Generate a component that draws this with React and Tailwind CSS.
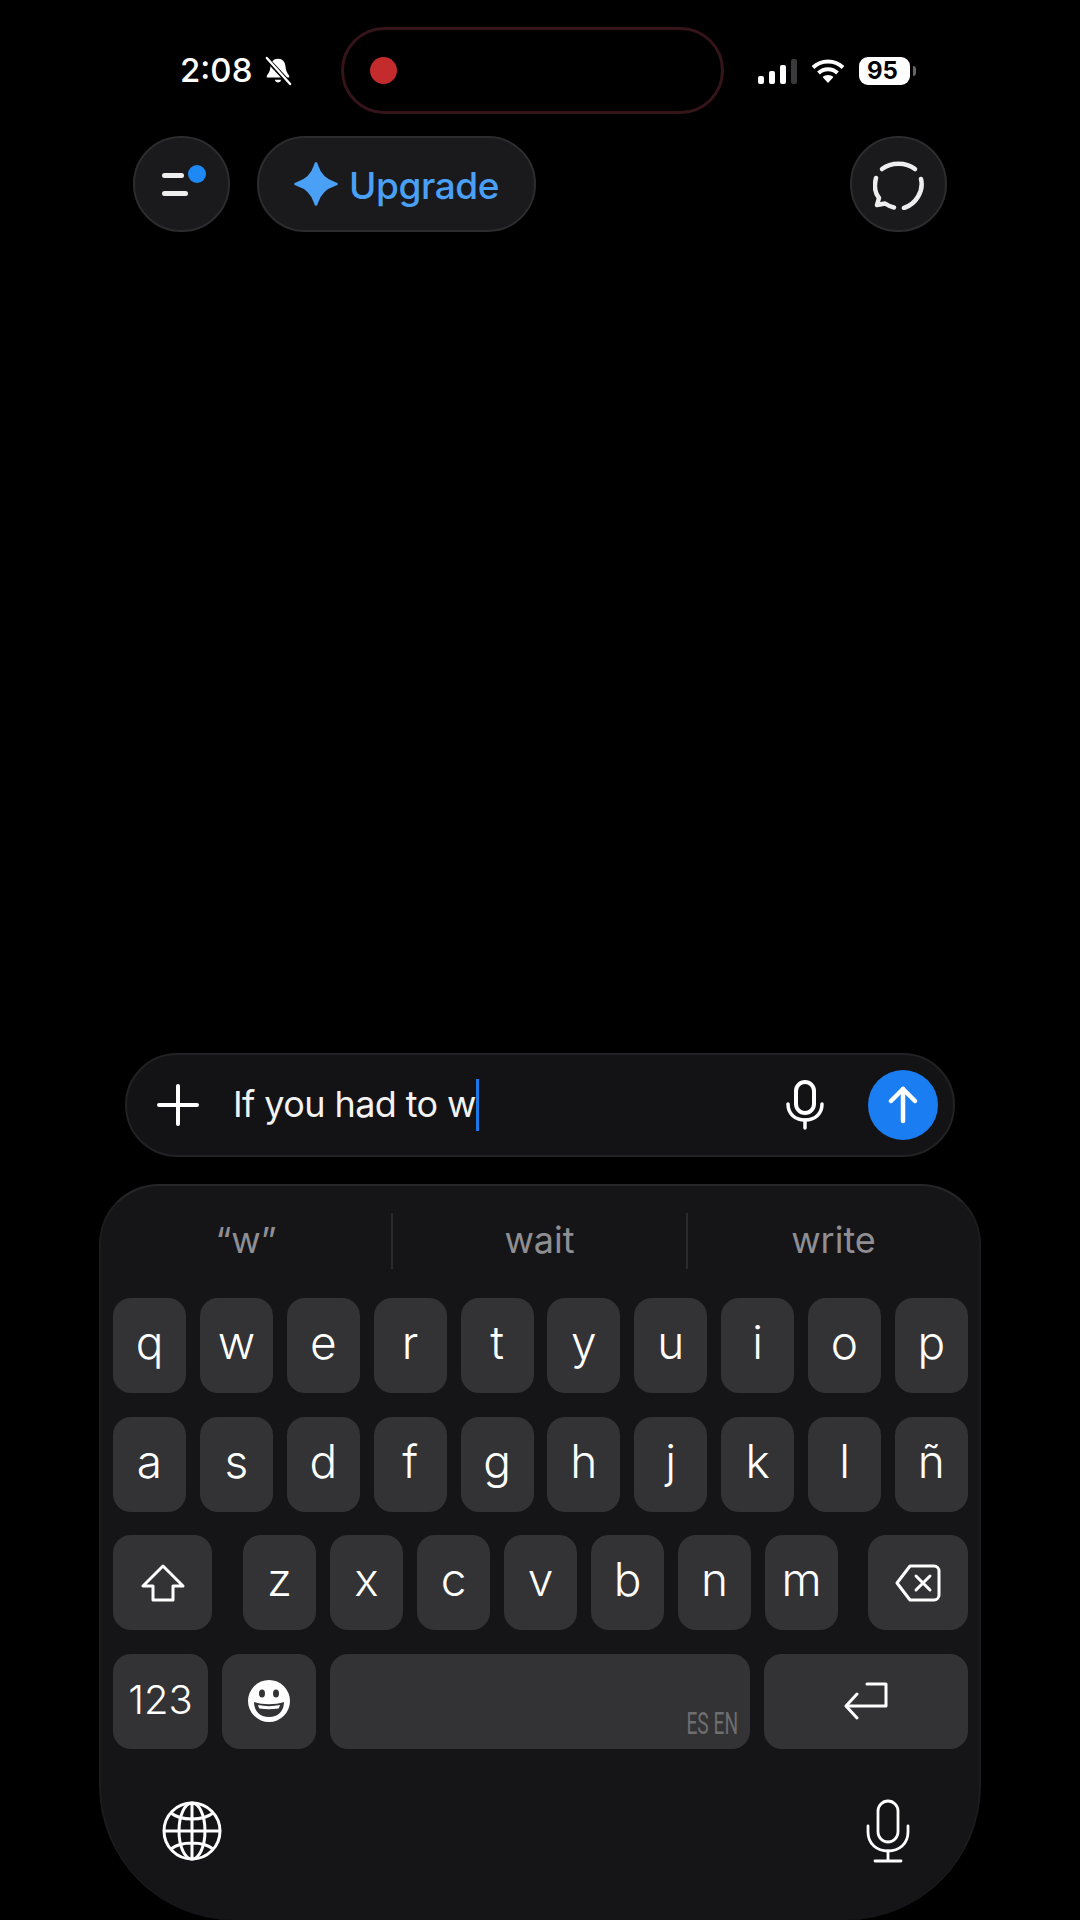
import React from 'react';

const Key = ({ children, className = 'w-[73px]' }) => (
    <div className={`${className} h-[95px] shrink-0 rounded-[18px] bg-[#333335] flex items-center justify-center text-white text-[46px] font-light leading-none`}>
        {children}
    </div>
);

// letter keys sit a little above the middle of the cap
const Letter = ({ children }) => <span className="-mt-[7px]">{children}</span>;

const Row = ({ letters }) => letters.map((l) => <Key key={l}><Letter>{l}</Letter></Key>);

const Bell = () => (
    <svg width="28" height="30" viewBox="0 0 30 30" fill="none">
        <path d="M15 2c-5 0-7.5 3.500-8 8-.4 4.500-1.500 7-4 10v2h24v-2c-2.500-3-3.600-5.500-4-10-.5-4.500-3-8-8-8z" fill="#fff" />
        <path d="M11.500 24.500a3.600 3.600 0 0 0 7 0z" fill="#fff" />
        <path d="M2 1l26 28" stroke="#000" strokeWidth="5" />
        <path d="M3 1l25 28" stroke="#fff" strokeWidth="2.500" strokeLinecap="round" />
    </svg>
);

const Wifi = () => (
    <svg width="34" height="26" viewBox="0 0 34 26" fill="none" stroke="#fff" strokeWidth="4">
        <path d="M2 9.500c8.500-8 21.500-8 30 0" />
        <path d="M7.500 15c5.500-5 13.500-5 19 0" />
        <path d="M17 25l-5.500-6c3-2.700 8-2.700 11 0z" fill="#fff" stroke="none" />
    </svg>
);

const Signal = () => (
    <div className="flex items-end gap-[5px] h-[26px]">
        <div className="w-[6px] h-[8px] rounded-[2px] bg-white" />
        <div className="w-[6px] h-[13px] rounded-[2px] bg-white" />
        <div className="w-[6px] h-[19px] rounded-[2px] bg-white" />
        <div className="w-[6px] h-[25px] rounded-[2px] bg-[#3a3a3c]" />
    </div>
);

const Sparkle = () => (
    <svg width="46" height="46" viewBox="0 0 46 46">
        <path d="M23 1Q24.500 1 25 4Q29 17 42 21Q45 22 45 23Q45 24 42 25Q29 29 25 42Q24.500 45 23 45Q21.500 45 21 42Q17 29 4 25Q1 24 1 23Q1 22 4 21Q17 17 21 4Q21.500 1 23 1z" fill="#4aa0f5" />
    </svg>
);

const ChatRing = () => (
    <svg width="51" height="49" viewBox="0 0 51 49" fill="none" stroke="#eeeeee" strokeWidth="4.500" strokeLinecap="round" strokeLinejoin="round">
        <path d="M9 8C18 1 33 1 42 8" />
        <path d="M48 18C51 30 43 43 31 47" />
        <path d="M3 17C1 25 2 32 6 37L4 44L12 42.500C15 44.500 18 46 21 46.500" />
    </svg>
);

const InputMic = () => (
    <svg width="38" height="50" viewBox="0 0 38 50" fill="none" stroke="#fff" strokeLinecap="round">
        <rect x="10" y="2" width="18" height="31" rx="9" strokeWidth="4" />
        <path d="M2 24c0 10 7 16 17 16s17-6 17-16" strokeWidth="3.500" />
        <path d="M19 40v8" strokeWidth="3.500" />
    </svg>
);

const ArrowUp = () => (
    <svg width="34" height="38" viewBox="0 0 34 38" fill="none" stroke="#fff" strokeWidth="4.500" strokeLinecap="round" strokeLinejoin="round">
        <path d="M17 35V3" />
        <path d="M5 15L17 3l12 12" />
    </svg>
);

const Shift = () => (
    <svg width="44" height="38" viewBox="0 0 44 38" fill="none" stroke="#fff" strokeWidth="3" strokeLinejoin="round">
        <path d="M22 2L2 22h10v14h20V22h10z" />
    </svg>
);

const Backspace = () => (
    <svg width="46" height="38" viewBox="0 0 46 38" fill="none" stroke="#fff" strokeWidth="3" strokeLinejoin="round" strokeLinecap="round">
        <path d="M15 2h24a5 5 0 0 1 5 5v24a5 5 0 0 1-5 5H15L2 19z" />
        <path d="M21 12l14 14M35 12L21 26" />
    </svg>
);

const Smile = () => (
    <svg width="44" height="44" viewBox="0 0 44 44">
        <circle cx="22" cy="22" r="21" fill="#fff" />
        <ellipse cx="15" cy="14.500" rx="3" ry="4" fill="#333335" />
        <ellipse cx="29" cy="14.500" rx="3" ry="4" fill="#333335" />
        <path d="M7 23c9 3 21 3 30 0c0 9-6 15-15 15S7 32 7 23z" fill="#333335" />
        <path d="M11 26c7 1.500 15 1.500 22 0c-.5 2-1 3-1.500 3.500c-6 1-13 1-19 0c-.5-.5-1-1.500-1.500-3.500z" fill="#fff" />
    </svg>
);

const Return = () => (
    <svg width="44" height="38" viewBox="0 0 44 38" fill="none" stroke="#fff" strokeWidth="3" strokeLinecap="round" strokeLinejoin="round">
        <path d="M23 2h19v22H3" />
        <path d="M13 12L2 24l11 12" />
    </svg>
);

const Globe = () => (
    <svg width="60" height="60" viewBox="0 0 60 60" fill="none" stroke="#fff" strokeWidth="3">
        <circle cx="30" cy="30" r="28" />
        <ellipse cx="30" cy="30" rx="13" ry="28" />
        <path d="M30 2v56M2 30h56M9 12c10 8 32 8 42 0M9 48c10-8 32-8 42 0" />
    </svg>
);

const BottomMic = () => (
    <svg width="44" height="64" viewBox="0 0 44 64" fill="none" stroke="#fff" strokeWidth="2.800" strokeLinecap="round">
        <rect x="12" y="2" width="20" height="41" rx="10" />
        <path d="M2 27v6c0 12 9 19 20 19s20-7 20-19v-6" />
        <path d="M22 52v10M9 62h26" />
    </svg>
);

export default function App() {
    return (
        <div className="w-[1080px] h-[1920px] bg-black flex flex-col overflow-hidden font-['Inter',sans-serif] text-white">
            {/* status bar */}
            <div className="h-[87px] mt-[27px] flex shrink-0">
                <div className="w-[341px] pl-[180px] flex items-center gap-[12px]">
                    <span className="text-[33px] font-medium leading-none">2:08</span>
                    <Bell />
                </div>
                <div className="w-[383px] h-[87px] rounded-[44px] border-[3px] border-[#35141a] flex items-center pl-[26px]">
                    <div className="w-[27px] h-[27px] rounded-full bg-[#c42b2d]" />
                </div>
                <div className="flex items-center pl-[34px] gap-[14px]">
                    <Signal />
                    <Wifi />
                    <div className="flex items-center gap-[3px]">
                        <div className="w-[51px] h-[28px] rounded-[9px] bg-white text-black text-[24px] font-bold leading-none flex items-center justify-center pr-[4px]">95</div>
                        <div className="w-[3px] h-[10px] rounded-r-full bg-[#666]" />
                    </div>
                </div>
            </div>

            {/* top buttons */}
            <div className="mt-[22px] pl-[133px] pr-[133px] flex items-center justify-between shrink-0">
                <div className="flex gap-[27px]">
                    <div className="relative w-[97px] h-[96px] rounded-full bg-[#1a1a1c] border-2 border-[#2c2c2e] flex flex-col gap-[13px] pl-[27px] pt-[35px]">
                        <div className="w-[22px] h-[5px] rounded-full bg-[#eee]" />
                        <div className="w-[26px] h-[5px] rounded-full bg-[#eee]" />
                        <div className="absolute left-[53px] top-[27px] w-[18px] h-[18px] rounded-full bg-[#1e88f5]" />
                    </div>
                    <div className="w-[279px] h-[96px] rounded-full bg-[#1a1a1c] border-2 border-[#2c2c2e] flex items-center pl-[34px] gap-[10px]">
                        <Sparkle />
                        <span className="mt-[2px] text-[37px] font-medium text-[#4aa0f5] leading-none tracking-[-0.4px]">Upgrade</span>
                    </div>
                </div>
                <div className="w-[97px] h-[96px] rounded-full bg-[#1a1a1c] border-2 border-[#2c2c2e] flex items-center justify-center pt-[3px]">
                    <ChatRing />
                </div>
            </div>

            <div className="flex-1" />

            {/* input */}
            <div className="mx-[125px] w-[830px] h-[104px] rounded-[52px] bg-[#131315] border-2 border-[#222224] flex items-center pl-[30px] pr-[15px] shrink-0">
                <svg width="42" height="42" viewBox="0 0 42 42" stroke="#fff" strokeWidth="4" strokeLinecap="round">
                    <path d="M21 2v38M2 21h38" />
                </svg>
                <div className="ml-[34px] flex items-center flex-1">
                    <span className="-mt-[2px] text-[36px] leading-none text-[#f2f2f2] tracking-[-0.6px]">If you had to w</span>
                    <div className="w-[3px] h-[52px] bg-[#1b78e8]" />
                </div>
                <InputMic />
                <div className="ml-[44px] w-[70px] h-[70px] rounded-full bg-[#1a7ef2] flex items-center justify-center">
                    <ArrowUp />
                </div>
            </div>

            {/* keyboard */}
            <div className="mt-[27px] mx-[99px] w-[882px] h-[736px] bg-[#151517] border-t-2 border-x-2 border-t-[#262628] border-x-[#1c1c1e] rounded-t-[60px] rounded-b-[135px] shrink-0 flex flex-col pl-[12px] pr-[11px]">
                <div className="h-[112px] flex items-center text-[36px] leading-none text-[#8e8e93] -ml-[12px] -mr-[11px] -mt-[1px]">
                    <div className="w-[292px] h-[56px] flex items-center justify-center border-r-2 border-[#2a2a2c]"><span className="-mt-[2px]">“w”</span></div>
                    <div className="w-[295px] h-[56px] flex items-center justify-center border-r-2 border-[#2a2a2c]"><span className="-mt-[2px]">wait</span></div>
                    <div className="flex-1 flex items-center justify-center"><span className="-mt-[2px]">write</span></div>
                </div>
                <div className="mt-[1px] flex flex-col gap-[23.5px]">
                    <div className="flex justify-between">
                        <Row letters={['q', 'w', 'e', 'r', 't', 'y', 'u', 'i', 'o', 'p']} />
                    </div>
                    <div className="flex justify-between">
                        <Row letters={['a', 's', 'd', 'f', 'g', 'h', 'j', 'k', 'l', 'ñ']} />
                    </div>
                    <div className="flex">
                        <Key className="w-[99px]"><Shift /></Key>
                        <div className="ml-[31px] flex gap-[14px]">
                            <Row letters={['z', 'x', 'c', 'v', 'b', 'n', 'm']} />
                        </div>
                        <Key className="w-[100px] ml-[30px]"><Backspace /></Key>
                    </div>
                    <div className="flex gap-[14px]">
                        <Key className="w-[95px] !text-[40px]"><span className="-mt-[2px]">123</span></Key>
                        <Key className="w-[94px]"><Smile /></Key>
                        <div className="w-[420px] h-[95px] shrink-0 rounded-[18px] bg-[#333335] flex items-end justify-end pr-[12px] pb-[10px] text-[32px] leading-none text-[#6e6e70] font-['Roboto',sans-serif]">
                            <span className="scale-x-[0.6] origin-right whitespace-nowrap">ES EN</span>
                        </div>
                        <Key className="w-[204px]"><Return /></Key>
                    </div>
                </div>
                <div className="mt-[50px] flex items-center justify-between pl-[49px] pr-[58px]">
                    <Globe />
                    <BottomMic />
                </div>
            </div>
        </div>
    );
}
